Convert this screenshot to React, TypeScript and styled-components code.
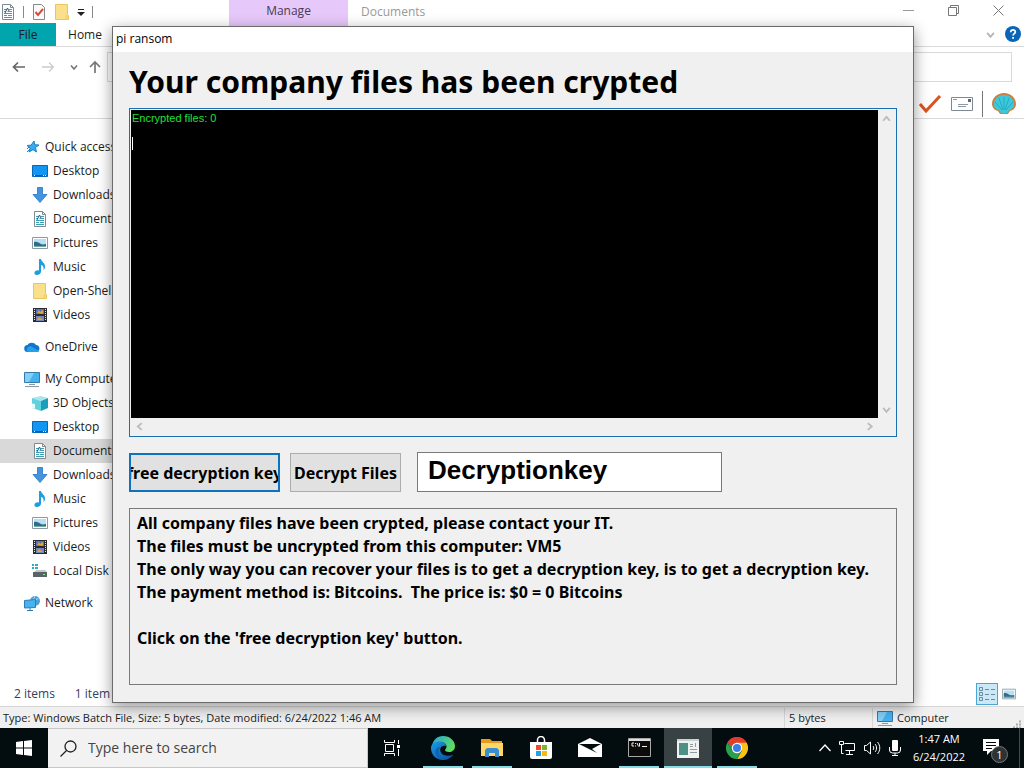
import React from 'react';
import styled, { createGlobalStyle, css } from 'styled-components';

const ui = `'Segoe UI', 'Open Sans', 'Noto Sans', sans-serif`;
const comic = `'Comic Sans MS', 'Noto Sans', sans-serif`;

const GlobalStyle = createGlobalStyle`
  * { box-sizing: border-box; }
  body { margin: 0; background: #fff; font: 12px/16px ${ui}; color: #1b1b1b; overflow: hidden; }
  button, input, textarea { font: inherit; color: inherit; border-radius: 0; margin: 0; }
  button { border: 0; background: none; padding: 0; }
  svg { display: block; flex: none; }
`;

const Desktop = styled.div`
  position: relative;
  display: flex;
  flex-direction: column;
  min-height: 100vh;
`;

/* ---------- File explorer ---------- */

const Explorer = styled.main`
  flex: 1;
  display: flex;
  flex-direction: column;
  background: #fff;
`;

const TitleBar = styled.header`
  display: flex;
  height: 23px;
`;

const QuickTools = styled.div`
  display: flex;
  align-items: center;
  gap: 7px;
  width: 229px;
`;

const Rule = styled.span<{ $h?: number; $c?: string }>`
  width: 1px;
  height: ${p => p.$h ?? 12}px;
  background: ${p => p.$c ?? '#8a8a8a'};
`;

const ManageTab = styled.button`
  width: 119px;
  height: 27px;
  padding-bottom: 6px;
  background: #e6c8fa;
  color: #4a3a55;
`;

const WindowTitle = styled.span`
  flex: 1;
  padding: 4px 13px;
  color: #999;
`;

const WindowButtons = styled.div`
  display: flex;
  padding-right: 3px;
  button {
    width: 45px;
    height: 21px;
    display: grid;
    place-items: center;
  }
`;

const Tabs = styled.nav`
  display: flex;
  align-items: center;
  height: 24px;
  border-bottom: 1px solid #dadada;
`;

const RibbonTab = styled.button<{ $file?: boolean }>`
  width: ${p => (p.$file ? 56 : 58)}px;
  height: 23px;
  ${p => p.$file && css`background: #00a5ae;`}
`;

const TabsEnd = styled.div`
  display: flex;
  align-items: center;
  gap: 10px;
  height: 22px;
  margin: 0 0 auto auto;
  padding-right: 3px;
`;

const NavRow = styled.div`
  display: flex;
  align-items: center;
  height: 40px;
  padding: 0 12px;
`;

const NavButtons = styled.div`
  display: flex;
  align-items: center;
  gap: 15px;
  width: 95px;
`;

const NearPair = styled.div`
  display: flex;
  align-items: center;
  gap: 10px;
`;

const Address = styled.label`
  flex: 1;
  display: flex;
  align-items: center;
  height: 30px;
  padding-left: 3px;
  border: 1px solid #d9d9d9;
  input { flex: 1; border: 0; outline: 0; background: none; }
`;

const ShellTools = styled.div`
  display: flex;
  align-items: center;
  justify-content: flex-end;
  gap: 9px;
  height: 32px;
  padding: 2px 8px 0 0;
  border-bottom: 1px solid #d9d9d9;
`;

const Sidebar = styled.nav`
  flex: 1;
  width: 200px;
  padding-top: 16px;
`;

const Group = styled.ul`
  margin: 0 0 8px;
  padding: 0;
  list-style: none;
`;

const Place = styled.a<{ $root?: boolean; $selected?: boolean }>`
  display: flex;
  align-items: center;
  gap: 5px;
  height: 24px;
  padding-left: ${p => (p.$root ? 24 : 32)}px;
  color: #1b1b1b;
  text-decoration: none;
  background: ${p => (p.$selected ? '#d9d9d9' : 'transparent')};
`;

const Summary = styled.div`
  display: flex;
  align-items: center;
  gap: 20px;
  height: 24px;
  padding: 0 8px 0 14px;
  color: #33415f;
`;

const ViewButtons = styled.div`
  display: flex;
  align-items: center;
  gap: 4px;
  margin-left: auto;
`;

const ViewButton = styled.button<{ $on?: boolean }>`
  display: grid;
  place-items: center;
  height: 22px;
  width: ${p => (p.$on ? 22 : 14)}px;
  ${p => p.$on && css`border: 1px solid #4ba6d3; background: #cbe8f6;`}
`;

const StatusBar = styled.footer`
  display: flex;
  align-items: center;
  height: 22px;
  background: #f0f0f0;
  border-top: 1px solid #d7d7d7;
  font-size: 11px;
`;

const StatusCell = styled.span<{ $w?: number }>`
  display: flex;
  align-items: center;
  gap: 4px;
  height: 20px;
  padding: 0 3px;
  ${p => (p.$w ? css`width: ${p.$w}px; padding-left: 4px; border-left: 1px solid #d7d7d7;` : css`flex: 1;`)}
`;

const Grip = styled.span`
  margin-left: auto;
  align-self: end;
`;

/* ---------- Ransom window ---------- */

const Dialog = styled.section`
  position: absolute;
  top: 26px;
  left: 112px;
  width: calc(100% - 222px);
  border: 1px solid #6b6b6b;
  background: #f0f0f0;
  box-shadow: 0 4px 14px rgba(0, 0, 0, 0.42);
  color: #000;
`;

const DialogTitle = styled.header`
  height: 25px;
  padding: 4px 3px;
  background: #fff;
`;

const DialogBody = styled.div`
  display: flex;
  flex-direction: column;
  gap: 16px;
  padding: 10px 16px 17px;
`;

const Heading = styled.h1`
  margin: 0 0 -10px;
  font: bold 30px/40px ${comic};
  white-space: nowrap;
`;

const Console = styled.div`
  position: relative;
  display: grid;
  grid-template-columns: 1fr 17px;
  grid-template-rows: 308px 17px;
  padding: 1px;
  border: 1px solid #1a6fae;
`;

const ConsoleText = styled.textarea`
  display: block;
  width: 100%;
  height: 100%;
  padding: 2px 1px;
  border: 0;
  outline: 0;
  resize: none;
  overflow: hidden;
  background: #000;
  color: #1fe03a;
  font: 11px/13px 'Liberation Sans', Arial, sans-serif;
`;

const Caret = styled.span`
  position: absolute;
  left: 2px;
  top: 28px;
  width: 1px;
  height: 13px;
  background: #fff;
`;

const ScrollTrack = styled.div<{ $row?: boolean }>`
  display: flex;
  flex-direction: ${p => (p.$row ? 'row' : 'column')};
  align-items: center;
  justify-content: space-between;
  padding: ${p => (p.$row ? '0 4px' : '4px 0')};
`;

const Controls = styled.div`
  display: flex;
  align-items: flex-end;
  margin-top: -1px;
`;

const PushButton = styled.button<{ $w: number; $focus?: boolean }>`
  display: flex;
  justify-content: center;
  align-items: center;
  width: ${p => p.$w}px;
  height: 39px;
  margin-right: 10px;
  overflow: hidden;
  border: ${p => (p.$focus ? '2px solid #0f72bd' : '1px solid #adadad')};
  background: #e1e1e1;
  font: bold 16px/22px ${comic};
  white-space: nowrap;
`;

const KeyInput = styled.input`
  width: 305px;
  height: 40px;
  margin-left: 6px;
  padding: 0 10px 4px;
  border: 1px solid #7a7a7a;
  background: #fff;
  font: bold 26px/32px 'Liberation Sans', Arial, sans-serif;
`;

const Message = styled.textarea`
  display: block;
  width: 100%;
  height: 177px;
  padding: 3px 7px;
  border: 1px solid #7a7a7a;
  resize: none;
  overflow: hidden;
  background: #f0f0f0;
  font: bold 16px/23px ${comic};
  white-space: pre;
`;

/* ---------- Taskbar ---------- */

const Taskbar = styled.footer`
  display: flex;
  height: 40px;
  background: #030c0e;
  color: #fff;
`;

const Start = styled.button`
  display: grid;
  place-items: center;
  width: 48px;
`;

const Search = styled.label`
  display: flex;
  align-items: center;
  gap: 11px;
  width: 320px;
  padding-left: 12px;
  background: #f2f2f2;
  border: 1px solid #c8c8c8;
  border-left: 0;
  input {
    flex: 1;
    min-width: 0;
    border: 0;
    outline: 0;
    padding: 0;
    background: none;
    font: 14px/20px ${ui};
  }
  input::placeholder { color: #444; opacity: 1; }
`;

const Apps = styled.div`
  display: flex;
  gap: 1px;
`;

const AppButton = styled.button<{ $running?: boolean; $active?: boolean }>`
  display: grid;
  place-items: center;
  width: 48px;
  height: 40px;
  &:first-child { margin-right: 2px; }
  ${p => p.$running && css`
    background: linear-gradient(#86dce4, #86dce4) center bottom / 40px 2px no-repeat;
  `}
  ${p => p.$active && css`
    background: linear-gradient(#86dce4, #86dce4) center bottom / 48px 2px no-repeat, #384143;
  `}
`;

const Tray = styled.div`
  display: flex;
  align-items: center;
  gap: 8px;
  margin-left: auto;
  padding-right: 4px;
`;

const Clock = styled.time`
  width: 60px;
  text-align: center;
  font-size: 11px;
  line-height: 18px;
`;

const Notices = styled.button`
  position: relative;
  width: 34px;
  height: 40px;
  padding: 0 0 2px 6px;
  color: #fff;
`;

const Badge = styled.span`
  position: absolute;
  left: 14px;
  top: 18px;
  width: 17px;
  height: 17px;
  border: 1px solid #777;
  border-radius: 50%;
  background: #2b3335;
  font-size: 11px;
  line-height: 15px;
`;

/* ---------- Icons ---------- */

const Svg = ({ s = 16, w, h, v, children }: { s?: number; w?: number; h?: number; v?: string; children: React.ReactNode }) => (
  <svg width={w ?? s} height={h ?? s} viewBox={v ?? `0 0 ${w ?? s} ${h ?? s}`} fill="none" aria-hidden="true">{children}</svg>
);

const DocIcon = () => (
  <Svg>
    <path d="M2.500.500h8l3 3v12h-11z" fill="#fff" stroke="#7e8a92" />
    <path d="M10.500.500v3h3" stroke="#7e8a92" />
    <path d="M4 5.500h3M9 5.500h3M4 7.500h2M7.500 7.500H12M4 9.500h8M4 11.500h3M8 11.500h4M4 13.500h8" stroke="#3f9fb5" />
    <path d="m5 9 2.500-5L9 7" stroke="#245f80" />
  </Svg>
);
const CheckDoc = () => (
  <Svg>
    <path d="M2.500.500h8l3 3v12h-11z" fill="#fafafa" stroke="#888" />
    <path d="m4.500 8 2.500 3 5-6" stroke="#db4b3b" strokeWidth="2" />
  </Svg>
);
const FolderDoc = () => (
  <Svg>
    <path d="M1.500.500h12v10l1 1v4h-13z" fill="#fbe08b" stroke="#e8c561" />
    <path d="M11.500 15.500v-4l2-1v5z" fill="#f5d06c" />
  </Svg>
);
const StarIcon = () => (
  <Svg>
    <path d="m10 2 .8 3.700 4.200.3-3.500 2.600 1 4.400-3.500-2.300L5 13l1.200-4L3 6.500l4-.3z" fill="#35aaf0" stroke="#1b83c6" />
    <path d="m3 13 3-3M3 10l2-2" stroke="#1b83c6" />
  </Svg>
);
const DesktopIcon = () => (
  <Svg>
    <path d="M.500 2.500h15v11H.500z" fill="#1296f3" stroke="#0b66b4" />
    <path d="M1 12.500h14" stroke="#0a5ca2" />
    <path d="M2 12.500h1M11 12.500h1M13 12.500h1" stroke="#fff" />
  </Svg>
);
const DownIcon = () => (
  <Svg><path d="M5.500.500h5v7h4.500L8 15.500 1 7.500h4.500z" fill="#4593df" stroke="#3d86cd" /></Svg>
);
const PictureIcon = () => (
  <Svg>
    <path d="M.500 2.500h15v11H.500z" fill="#fff" stroke="#8e9aa3" />
    <path d="M2 4h12v8H2z" fill="#b9dff5" />
    <path d="M2 7c3-1 5 1 7 2s3 0 5 0v3H2z" fill="#2e6c92" />
    <path d="M2 11h12v1H2z" fill="#6fae9e" />
  </Svg>
);
const MusicIcon = () => (
  <Svg>
    <path d="M7 0h2c.5 3 4.500 4 4 8-.1 1.500-.8 2.500-1.500 3 .5-3-.5-4.500-2.500-5v6.500C9 14.500 7 16 5 16s-3-1-2.500-2.500S5 11 7 11.500z" fill="#1e9de0" />
  </Svg>
);
const VideoIcon = () => (
  <Svg>
    <path d="M1 1h14v14H1z" fill="#2c2c30" />
    <path d="M2.500 2v12M13.500 2v12" stroke="#e8e8e8" strokeDasharray="1 1" />
    <path d="M4 2h8v5H4z" fill="#5276c4" />
    <path d="M4 9h8v5H4z" fill="#7387bd" />
    <path d="m5 6 2-3 1 2 3-2v4zM5 13l2-3 4 3z" fill="#d9a842" />
  </Svg>
);
const CloudIcon = () => (
  <Svg>
    <path d="M4 13a3.500 3.500 0 0 1-.5-7A5 5 0 0 1 12 6a3.600 3.600 0 0 1 1 7z" fill="#1174cc" />
    <path d="M4 13a3.500 3.500 0 0 1 0-5c2-1.500 4-.5 5 .5L15.500 12c-.6.700-1.500 1-2.500 1z" fill="#279ee9" />
  </Svg>
);
const ComputerIcon = () => (
  <Svg>
    <path d="M.500 1.500h15v10H.500z" fill="#45b2f0" stroke="#3779a7" />
    <path d="M1 2h9L5 11H1z" fill="#82cff8" />
    <path d="M5 13.500h6M1 15.500h14" stroke="#8b99a3" />
  </Svg>
);
const CubeIcon = () => (
  <Svg>
    <path d="m0 3 9-2 7 2-7 3z" fill="#a7e6ee" />
    <path d="m0 3 9 3v10l-9-3z" fill="#62d1df" />
    <path d="m9 6 7-3v10l-7 3z" fill="#1a9fbb" />
    <path d="M0 8.500 3 9v5l-3-1z" fill="#e7fbfc" />
  </Svg>
);
const DiskIcon = () => (
  <Svg>
    <path d="M0 1h2v2H0zM3 1h3v2H3zM0 4h2v2H0zM3 4h3v2H3z" fill="#1fb4c0" />
    <path d="m2 9 2-2h9l2 2z" fill="#c2c8ca" />
    <path d="M1 9h14v5H1z" fill="#596469" />
    <path d="M11 11h2v1h-2z" fill="#7dee86" />
  </Svg>
);
const NetworkIcon = () => (
  <Svg>
    <circle cx="11" cy="6" r="5" fill="#4e9fd2" />
    <path d="M6.500 5c4 1 7-1 8-2M11 1c-2 3-2 7 1 10" stroke="#b8e1f5" />
    <path d="m.500 5.500 11-1v8l-11 .5z" fill="#47b2ef" stroke="#2a7db5" />
    <path d="M3 15.500h6M6 13v2" stroke="#2a7db5" />
  </Svg>
);
const Chevron = ({ dir, c = '#b5b5b5', w = 9 }: { dir: 'up' | 'down' | 'left' | 'right'; c?: string; w?: number }) => {
  const d = { up: 'm1 6 3-3.500L7 6', down: 'm1 2.500 3 3.500 3-3.500', left: 'M6 1 2.500 4 6 7', right: 'm2.500 1 3.500 3-3.500 3' }[dir];
  return <Svg s={w} v="0 0 8 8"><path d={d} stroke={c} strokeWidth="1.600" /></Svg>;
};
const Arrow = ({ c, up }: { c: string; up?: boolean }) => (
  <Svg s={14}><path d={up ? 'M7 13V2M2 7l5-5 5 5' : 'M13 7H1.500M6 2.500 1.500 7 6 11.500'} stroke={c} strokeWidth="1.700" /></Svg>
);
const ForwardArrow = () => <Svg s={14}><path d="M1 7h11.500M8 2.500 12.500 7 8 11.500" stroke="#ccc" strokeWidth="1.300" /></Svg>;

type Item = { name: string; icon: React.FC; root?: boolean; selected?: boolean };
const groups: Item[][] = [
  [
    { name: 'Quick access', icon: StarIcon, root: true },
    { name: 'Desktop', icon: DesktopIcon },
    { name: 'Downloads', icon: DownIcon },
    { name: 'Documents', icon: DocIcon },
    { name: 'Pictures', icon: PictureIcon },
    { name: 'Music', icon: MusicIcon },
    { name: 'Open-Shell', icon: FolderDoc },
    { name: 'Videos', icon: VideoIcon },
  ],
  [{ name: 'OneDrive', icon: CloudIcon, root: true }],
  [
    { name: 'My Computer', icon: ComputerIcon, root: true },
    { name: '3D Objects', icon: CubeIcon },
    { name: 'Desktop', icon: DesktopIcon },
    { name: 'Documents', icon: DocIcon, selected: true },
    { name: 'Downloads', icon: DownIcon },
    { name: 'Music', icon: MusicIcon },
    { name: 'Pictures', icon: PictureIcon },
    { name: 'Videos', icon: VideoIcon },
    { name: 'Local Disk (C:)', icon: DiskIcon },
  ],
  [{ name: 'Network', icon: NetworkIcon, root: true }],
];

const TaskViewIcon = () => (
  <Svg w={18} h={16}>
    <path d="M2.500 4.500h8v7h-8zM1.500 0v2.500h10V0M1.500 16v-2.500h10V16M15.500 0v4M15.500 9v7" stroke="#fff" />
    <path d="M14 5h3v3h-3z" fill="#fff" />
  </Svg>
);
const EdgeIcon = () => (
  <Svg s={24}>
    <defs>
      <linearGradient id="edgeTop" x1="0" y1="0" x2="1" y2=".4"><stop stopColor="#24a5df" /><stop offset="1" stopColor="#5ddb62" /></linearGradient>
      <linearGradient id="edgeLow" x1="0" y1="0" x2="1" y2="1"><stop stopColor="#1b9de2" /><stop offset="1" stopColor="#0d4a9c" /></linearGradient>
    </defs>
    <path d="M1 10C2 4 6 0 12 0c7 0 12 5 12 10 0 4-3 6-6 6-2.500 0-4-1-4-2s1.500-1 1.500-3.500S13 6 9 6s-7 2-8 4z" fill="url(#edgeTop)" />
    <path d="M0 12C0 8 4 5.500 9 5.500c3 0 6 2 6.500 4.500-5-1.500-7 2-6 5.500 1.500 4.500 8 5.500 13 3C20 22 16.500 24 12 24 5 24 0 19 0 12z" fill="url(#edgeLow)" />
    <path d="M9.500 11c-3 3-2.500 9 3.500 13-6-1-9-5-8.500-9 .3-2.500 2-4 5-4z" fill="#0f64b4" />
  </Svg>
);
const FolderIcon = () => (
  <Svg w={22} h={20}>
    <path d="M0 1h9l2 2h10v5H0z" fill="#e79a1c" />
    <path d="M0 5h22v13H0z" fill="#ffd766" />
    <path d="M4 19v-7l2-2h10l2 2v7h-4v-4H8v4z" fill="#3b8fd0" />
  </Svg>
);
const StoreIcon = () => (
  <Svg w={24} h={24}>
    <path d="M8.500 7V4a3.500 3.500 0 0 1 7 0v3" stroke="#fff" strokeWidth="1.500" />
    <path d="M1 6h22v15q0 2-2 2H3q-2 0-2-2z" fill="#fff" />
    <path d="M7 9h5v5H7z" fill="#ef4b2f" /><path d="M13 9h5v5h-5z" fill="#76b82a" />
    <path d="M7 15h5v5H7z" fill="#22a3df" /><path d="M13 15h5v5h-5z" fill="#fbb614" />
  </Svg>
);
const MailIcon = () => (
  <Svg w={24} h={20}>
    <path d="M0 6 12 0l12 6v13H0z" fill="#fff" />
    <path d="M1 6h22l-9 5 5 4z" fill="#030c0e" />
  </Svg>
);
const CmdIcon = () => (
  <Svg w={23} h={20}>
    <path d="M.500.500h22v18H.500z" fill="#0b0b0b" stroke="#a8a8a8" />
    <path d="M1 2h21" stroke="#ddd" strokeWidth="2" />
    <path d="M6 5H4v3h2M7.500 5v1M7.500 7.500v1M9 5l1.500 3.500M11.500 5v3.500M14 8.500h5" stroke="#eee" />
  </Svg>
);
const AppWindowIcon = () => (
  <Svg w={22} h={19}>
    <path d="M0 0h22v19H0z" fill="#f1f1f1" />
    <path d="M0 0h22v2H0z" fill="#c9d2d2" />
    <path d="M2 4h9v12H2z" fill="#4e8f86" />
    <path d="M13 5.500h3M13 7.500h3M13 10.500h7M13 13.500h7M18.500 4v4" stroke="#8ba0a0" />
  </Svg>
);
const ChromeIcon = () => (
  <Svg s={22} v="0 0 24 24">
    <path d="M12 12 1.600 6A12 12 0 0 1 22.400 6z" fill="#e33b2e" />
    <path d="M12 12V6h10.400A12 12 0 0 1 12 24l5.200-9z" fill="#fbc116" />
    <path d="m12 12 5.200 3L12 24A12 12 0 0 1 1.600 6l5.200 9z" fill="#29a04b" />
    <path d="M1.600 6 6.800 15 12 12V6z" fill="#29a04b" />
    <path d="M1.600 6A12 12 0 0 1 22.400 6H12a6 6 0 0 0-5.500 4z" fill="#e33b2e" />
    <circle cx="12" cy="12" r="5.700" fill="#fff" /><circle cx="12" cy="12" r="4.400" fill="#3c7ee8" />
  </Svg>
);

const apps = [
  { name: 'Task View', icon: TaskViewIcon },
  { name: 'Microsoft Edge', icon: EdgeIcon, running: true },
  { name: 'File Explorer', icon: FolderIcon, running: true },
  { name: 'Microsoft Store', icon: StoreIcon },
  { name: 'Mail', icon: MailIcon },
  { name: 'Command Prompt', icon: CmdIcon, running: true },
  { name: 'pi ransom', icon: AppWindowIcon, active: true },
  { name: 'Google Chrome', icon: ChromeIcon, running: true },
];

const message = `All company files have been crypted, please contact your IT.
The files must be uncrypted from this computer: VM5
The only way you can recover your files is to get a decryption key, is to get a decryption key.
The payment method is: Bitcoins.  The price is: $0 = 0 Bitcoins

Click on the 'free decryption key' button.`;

export default function App() {
  return (
    <Desktop>
      <GlobalStyle />
      <Explorer>
        <TitleBar>
          <QuickTools>
            <DocIcon /><Rule /><NearPair><CheckDoc /></NearPair><FolderDoc />
            <Svg w={8} h={8}><path d="M1 1.500h6" stroke="#222" /><path d="M0 4h8L4 8z" fill="#222" /></Svg>
            <Rule />
          </QuickTools>
          <ManageTab>Manage</ManageTab>
          <WindowTitle>Documents</WindowTitle>
          <WindowButtons>
            <button aria-label="Minimize"><Svg s={11}><path d="M0 5.500h11" stroke="#999" /></Svg></button>
            <button aria-label="Restore"><Svg s={11}><path d="M.500 2.500h8v8h-8zM2.500 2.500v-2h8v8h-2" stroke="#777" /></Svg></button>
            <button aria-label="Close"><Svg s={11}><path d="m.500.500 10 10M10.500.500l-10 10" stroke="#777" /></Svg></button>
          </WindowButtons>
        </TitleBar>
        <Tabs>
          <RibbonTab $file>File</RibbonTab>
          <RibbonTab>Home</RibbonTab>
          <TabsEnd>
            <Chevron dir="down" />
            <Svg s={16}>
              <circle cx="8" cy="8" r="8" fill="#0a64b8" />
              <path d="M5.700 6.200C5.700 3 10.400 3.200 10.300 6c0 1.700-2.200 1.600-2.200 3.500M8.100 11v1.800" stroke="#fff" strokeWidth="1.800" />
            </Svg>
          </TabsEnd>
        </Tabs>
        <NavRow>
          <NavButtons>
            <Arrow c="#666" /><ForwardArrow />
            <NearPair><Chevron dir="down" c="#777" w={8} /><Arrow c="#777" up /></NearPair>
          </NavButtons>
          <Address><DocIcon /><input aria-label="Address" /></Address>
        </NavRow>
        <ShellTools>
          <Svg w={24} h={20}><path d="m2 10 6 7L22 2" stroke="#dc5322" strokeWidth="3" /></Svg>
          <Svg w={22} h={14}>
            <path d="M.500.500h21v13H.500z" fill="#fff" stroke="#7d8a94" />
            <path d="M2 2.500h4M7 7.500h10M7 9.500h8" stroke="#8d9aa6" /><path d="M17 2h3v3h-3z" fill="#526b83" />
          </Svg>
          <Rule $h={26} $c="#777" />
          <Svg w={24} h={22}>
            <path d="M8 21 6 18C2 17 0 14 0 11 0 5 5 0 12 0s12 5 12 11c0 3-2 6-6 7l-2 3z" fill="#c98242" />
            <path d="M9 20 7 17C3 16 1.500 13 2 10 3 5 7 2 12 2s9 3 10 8c.5 3-1 6-5 7l-2 3z" fill="#3cc9dc" />
            <path d="M12 17V4M11 17 7 5M13 17l4-12M10 17 3 9M14 17l7-8" stroke="#27aac4" />
          </Svg>
        </ShellTools>
        <Sidebar aria-label="Folders">
          {groups.map((g, i) => (
            <Group key={i}>
              {g.map(({ name, icon: Icon, root, selected }) => (
                <li key={name}><Place href="#" $root={root} $selected={selected}><Icon />{name}</Place></li>
              ))}
            </Group>
          ))}
        </Sidebar>
        <Summary>
          <span>2 items</span><span>1 item selected</span>
          <ViewButtons>
            <ViewButton $on aria-label="Details view">
              <Svg><path d="M.500 1.500h3v3h-3zM.500 6.500h3v3h-3zM.500 11.500h3v3h-3zM6 3.500h4M12 3.500h4M6 8.500h4M12 8.500h4M6 13.500h4M12 13.500h4" stroke="#6a8b9c" /></Svg>
            </ViewButton>
            <ViewButton aria-label="Large icons view"><Svg s={14} v="0 0 16 16"><PictureIcon /></Svg></ViewButton>
          </ViewButtons>
        </Summary>
        <StatusBar>
          <StatusCell>Type: Windows Batch File, Size: 5 bytes, Date modified: 6/24/2022 1:46 AM</StatusCell>
          <StatusCell $w={88}>5 bytes</StatusCell>
          <StatusCell $w={152}>
            <ComputerIcon />Computer
            <Grip><Svg s={8}><path d="M6 1.500h2M3 4.500h2M6 4.500h2M0 7.500h2M3 7.500h2M6 7.500h2" stroke="#aaa" strokeWidth="2" /></Svg></Grip>
          </StatusCell>
        </StatusBar>
      </Explorer>

      <Dialog aria-label="pi ransom">
        <DialogTitle>pi ransom</DialogTitle>
        <DialogBody>
          <Heading>Your company files has been crypted</Heading>
          <Console>
            <ConsoleText aria-label="Log" spellCheck={false} defaultValue={'Encrypted files: 0\n\n'} />
            <ScrollTrack><Chevron dir="up" c="#bbb" /><Chevron dir="down" c="#bbb" /></ScrollTrack>
            <ScrollTrack $row><Chevron dir="left" c="#bbb" /><Chevron dir="right" c="#bbb" /></ScrollTrack>
            <Caret />
          </Console>
          <Controls>
            <PushButton $w={151} $focus>free decryption key</PushButton>
            <PushButton $w={111}>Decrypt Files</PushButton>
            <KeyInput aria-label="Decryption key" defaultValue="Decryptionkey" />
          </Controls>
          <Message aria-label="Message" readOnly spellCheck={false} value={message} />
        </DialogBody>
      </Dialog>

      <Taskbar>
        <Start aria-label="Start">
          <Svg s={16}><path d="m0 2 7-1v6.500H0zM8 .900 16 0v7.500H8zM0 8.500h7V15l-7-1zM8 8.500h8V16l-8-.9z" fill="#fff" /></Svg>
        </Start>
        <Search>
          <Svg s={17}><circle cx="10.500" cy="6.500" r="5.500" stroke="#222" strokeWidth="1.300" /><path d="M6.500 10.500.500 16.500" stroke="#222" strokeWidth="1.300" /></Svg>
          <input placeholder="Type here to search" aria-label="Search" />
        </Search>
        <Apps>
          {apps.map(({ name, icon: Icon, running, active }) => (
            <AppButton key={name} aria-label={name} $running={running} $active={active}><Icon /></AppButton>
          ))}
        </Apps>
        <Tray>
          <Svg w={12} h={8}><path d="m.500 7 5.500-6 5.500 6" stroke="#fff" strokeWidth="1.300" /></Svg>
          <Svg w={17} h={14}><path d="M5.500 2.500h10v7h-9M.500.500h4v3h-4zM2.500 4v8.500h2M10.500 10v3M7 13.500h7" stroke="#fff" /></Svg>
          <Svg w={17} h={14}><path d="M.500 4.500h2l4-3.500v12l-4-3.500h-2zM9 5c1 1 1 3 0 4M11 3c2 2 2 6 0 8M13.500 1c3 3.500 3 8.500 0 12" stroke="#fff" /></Svg>
          <Svg w={12} h={16}><rect x="3" width="6" height="11" rx="1" fill="#fff" /><path d="M.500 7v3q0 3 3 3h5q3 0 3-3V7M6 13v2.500M3 15.500h6" stroke="#fff" /></Svg>
          <Clock>1:47 AM<br />6/24/2022</Clock>
          <Notices aria-label="Notifications">
            <Svg w={16} h={16}><path d="M0 0h16v12H8l-4 4v-4H0z" fill="#fff" /><path d="M3 3.500h10M3 6.500h10M3 9.500h6" stroke="#030c0e" /></Svg>
            <Badge>1</Badge>
          </Notices>
          <Rule $h={40} $c="#444c4e" />
        </Tray>
      </Taskbar>
    </Desktop>
  );
}
